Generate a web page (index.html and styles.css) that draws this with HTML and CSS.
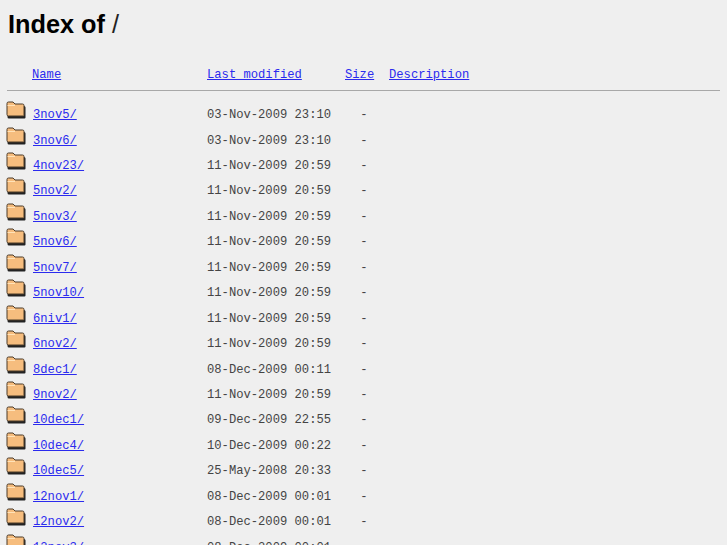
FILE: index.html
```html
<!DOCTYPE html>
<html>
<head>
  <meta charset="UTF-8">
  <title>Index of /</title>
  <link rel="stylesheet" href="styles.css">
</head>
<body>
  <h1>Index of <span class="slash">/</span></h1>
  <div class="row head"><span class="name"><a href="#">Name</a></span><span class="date"><a href="#">Last modified</a></span><span class="size"><a href="#">Size</a></span><a href="#">Description</a></div>
  <hr>
  <div class="listing" id="listing"></div>
  <script>
    var dirs = [
      ["3nov5/", "03-Nov-2009 23:10"],
      ["3nov6/", "03-Nov-2009 23:10"],
      ["4nov23/", "11-Nov-2009 20:59"],
      ["5nov2/", "11-Nov-2009 20:59"],
      ["5nov3/", "11-Nov-2009 20:59"],
      ["5nov6/", "11-Nov-2009 20:59"],
      ["5nov7/", "11-Nov-2009 20:59"],
      ["5nov10/", "11-Nov-2009 20:59"],
      ["6niv1/", "11-Nov-2009 20:59"],
      ["6nov2/", "11-Nov-2009 20:59"],
      ["8dec1/", "08-Dec-2009 00:11"],
      ["9nov2/", "11-Nov-2009 20:59"],
      ["10dec1/", "09-Dec-2009 22:55"],
      ["10dec4/", "10-Dec-2009 00:22"],
      ["10dec5/", "25-May-2008 20:33"],
      ["12nov1/", "08-Dec-2009 00:01"],
      ["12nov2/", "08-Dec-2009 00:01"],
      ["12nov3/", "08-Dec-2009 00:01"]
    ];
    var listing = document.getElementById("listing");
    dirs.forEach(function(d) {
      var row = document.createElement("div");
      row.className = "row";
      row.innerHTML = '<svg class="folder" viewBox="0 0 20 18"><path class="shade" d="M2 3h6l2 2h8a1.500 1.500 0 0 1 1.500 1.500v10a1 1 0 0 1-1 1H3a1.500 1.500 0 0 1-1.500-1.500z"/><path class="body" d="M1 2.500A1.500 1.500 0 0 1 2.500 1h4.500l2 2h7.500A1.500 1.500 0 0 1 18 4.500v10a.5.5 0 0 1-.5.5H2.500A1.500 1.500 0 0 1 1 13.500z"/><path class="tab" d="M1.500 4.500H9"/></svg>' +
        '<span class="name"><a href="#">' + d[0] + '</a></span>' +
        '<span class="date">' + d[1] + '</span><span class="dash">-</span>';
      listing.appendChild(row);
    });
  </script>
</body>
</html>
```

FILE: styles.css
```css
html {
  overflow: hidden;
  height: 100%;
}
body {
  background: #efefef;
  color: #444;
  margin: 0;
  padding: 0 7px;
  height: 545px;
  overflow: hidden;
  font-family: "Liberation Mono", monospace;
  font-size: 12.16px;
}
h1 {
  margin: 0;
  padding: 10px 0 0 1px;
  height: 47px;
  box-sizing: border-box;
  color: #000;
  font-family: "Liberation Sans", Arial, sans-serif;
  font-size: 25.3px;
  line-height: 29px;
  font-weight: bold;
}
.slash {
  font-weight: normal;
  color: #222;
}
a {
  color: #2b2bee;
}
.row {
  display: flex;
  align-items: center;
  height: 25.44px;
  white-space: pre;
}
.head {
  padding-left: 25px;
  margin-top: 15px;
}
.name {
  width: 175px;
  flex: none;
}
.date {
  width: 138px;
  flex: none;
}
.size {
  width: 44px;
  flex: none;
}
hr {
  margin: 3px 0 0;
  border: none;
  height: 1px;
  background: #a8a8a8;
}
.listing {
  padding-top: 11px;
}
.listing .name {
  width: 174px;
}
.listing .date {
  width: 153.3px;
}
.folder {
  width: 20px;
  height: 18px;
  margin-left: -1px;
  margin-right: 7px;
  margin-top: -10px;
  flex: none;
}
.shade {
  fill: #222;
}
.body {
  fill: #f6bd7e;
  stroke: #4a3a28;
  stroke-width: 1;
}
.tab {
  fill: none;
  stroke: #ffe2b8;
  stroke-width: 1;
}
```
